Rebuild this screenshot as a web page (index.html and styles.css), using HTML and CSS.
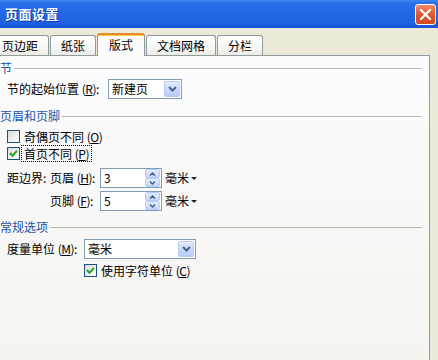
FILE: index.html
```html
<!DOCTYPE html>
<html lang="zh-CN">
<head>
<meta charset="UTF-8">
<title>页面设置</title>
<link rel="stylesheet" href="styles.css">
</head>
<body>

<div class="titlebar">
  <span class="title">页面设置</span>
  <span class="close">
    <svg width="13" height="13" viewBox="0 0 13 13"><path d="M2 2 L11 11 M11 2 L2 11" stroke="#fff" stroke-width="2.2" stroke-linecap="round"/></svg>
  </span>
</div>

<div class="tabs">
  <div class="tab first">页边距</div>
  <div class="tab">纸张</div>
  <div class="tab active">版式</div>
  <div class="tab">文档网格</div>
  <div class="tab">分栏</div>
</div>

<div class="page">

  <!-- 节 -->
  <div class="group g1"><span>节</span><i></i></div>
  <div class="row r-start">
    <span class="label">节的起始位置 <span class="key">(<u>R</u>)</span>:</span>
    <div class="select sel-start">
      <span class="val">新建页</span>
      <span class="drop"><svg width="9" height="6" viewBox="0 0 9 6"><path d="M1 1 L4.5 4.5 L8 1" fill="none" stroke="#4d6185" stroke-width="2"/></svg></span>
    </div>
  </div>

  <!-- 页眉和页脚 -->
  <div class="group g2"><span>页眉和页脚</span><i></i></div>
  <div class="row cb cb1">
    <span class="box"></span>
    <span class="cb-label">奇偶页不同 <span class="key">(<u>O</u>)</span></span>
  </div>
  <div class="row cb cb2">
    <span class="box"><svg width="11" height="11" viewBox="0 0 11 11"><path d="M2 5 L4.5 7.8 L9 2.8" fill="none" stroke="#21a121" stroke-width="2"/></svg></span>
    <span class="cb-label focus">首页不同 <span class="key">(<u>P</u>)</span></span>
  </div>

  <div class="row spin-row s1">
    <span>距边界:</span>
    <span>页眉 <span class="key">(<u>H</u>)</span>:</span>
    <div class="spin">
      <span class="val">3</span>
      <span class="btns">
        <span class="sbtn"><svg width="7" height="4" viewBox="0 0 7 4"><path d="M1 3.5 L3.5 1 L6 3.5" fill="none" stroke="#4d6185" stroke-width="1.5"/></svg></span>
        <span class="sbtn"><svg width="7" height="4" viewBox="0 0 7 4"><path d="M1 0.5 L3.5 3 L6 0.5" fill="none" stroke="#4d6185" stroke-width="1.5"/></svg></span>
      </span>
    </div>
    <span class="unit">毫米<b></b></span>
  </div>
  <div class="row spin-row s2">
    <span></span>
    <span>页脚 <span class="key">(<u>F</u>)</span>:</span>
    <div class="spin">
      <span class="val">5</span>
      <span class="btns">
        <span class="sbtn"><svg width="7" height="4" viewBox="0 0 7 4"><path d="M1 3.5 L3.5 1 L6 3.5" fill="none" stroke="#4d6185" stroke-width="1.5"/></svg></span>
        <span class="sbtn"><svg width="7" height="4" viewBox="0 0 7 4"><path d="M1 0.5 L3.5 3 L6 0.5" fill="none" stroke="#4d6185" stroke-width="1.5"/></svg></span>
      </span>
    </div>
    <span class="unit">毫米<b></b></span>
  </div>

  <!-- 常规选项 -->
  <div class="group g3"><span>常规选项</span><i></i></div>
  <div class="row r-unit">
    <span class="label">度量单位 <span class="key">(<u>M</u>)</span>:</span>
    <div class="select sel-unit">
      <span class="val">毫米</span>
      <span class="drop"><svg width="9" height="6" viewBox="0 0 9 6"><path d="M1 1 L4.5 4.5 L8 1" fill="none" stroke="#4d6185" stroke-width="2"/></svg></span>
    </div>
  </div>
  <div class="row cb cb3">
    <span class="box"><svg width="11" height="11" viewBox="0 0 11 11"><path d="M2 5 L4.5 7.8 L9 2.8" fill="none" stroke="#21a121" stroke-width="2"/></svg></span>
    <span class="cb-label">使用字符单位 <span class="key">(<u>C</u>)</span></span>
  </div>

</div>

</body>
</html>
```

FILE: styles.css
```css
*{box-sizing:border-box}
body{
  margin:0;
  width:438px;
  height:360px;
  overflow:hidden;
  background:#ece9d8;
  font:12px/14px "Noto Sans CJK SC", sans-serif;
  color:#000;
}

/* TITLE BAR */
.titlebar{
  height:28px;
  display:flex;
  align-items:center;
  justify-content:space-between;
  padding:0 2px 0 5px;
  background:linear-gradient(#3d86f2 0, #2a70ea 3px, #2468e6 40%, #1f62e2 80%, #1553d4 100%);
}
.title{
  color:#fff;
  font-weight:bold;
  font-size:13px;
  letter-spacing:0.5px;
  text-shadow:1px 1px #0c3a9e;
}
.close{
  width:21px;
  height:21px;
  border:1px solid #fff;
  border-radius:3px;
  background:linear-gradient(#ef8a66, #e2582f 50%, #d04a22);
  display:flex;
  align-items:center;
  justify-content:center;
}

/* TABS */
.tabs{
  display:flex;
  align-items:flex-end;
  gap:1px;
  height:22px;
  margin-top:5px;
  position:relative;
  z-index:1;
}
.tab{
  height:20px;
  padding:0 10px;
  border:1px solid #919b9c;
  border-bottom:none;
  border-radius:3px 3px 0 0;
  background:linear-gradient(#fff, #f6f6f3 60%, #ecebe6);
  line-height:19px;
}
.tab.first{margin-left:-9px}
.tab.active{
  height:23px;
  padding:0 11px;
  margin-bottom:-1px;
  border-top:2px solid #e68b2c;
  box-shadow:inset 0 1px #ffc73c;
  background:#fcfcfe;
  line-height:20px;
}

/* PAGE */
.page{
  margin-left:-5px;
  width:429px;
  height:320px;
  padding-left:5px;
  border-top:1px solid #919b9c;
  border-right:1px solid #919b9c;
  background:linear-gradient(#fcfcfe, #f4f3ee);
  box-sizing:content-box;
}

.group{
  display:flex;
  align-items:center;
  height:14px;
  color:#2253a8;
}
.group i{
  flex:1;
  height:1px;
  margin:0 7px 0 2px;
  background:#b8b8ae;
}
.g1{padding-top:5px;height:19px}
.g2{margin-top:10px}
.g3{margin-top:9px}

.row{
  display:flex;
  align-items:center;
}
.key{letter-spacing:-0.5px}
.key u{text-decoration-thickness:1px;text-underline-offset:1px}

.r-start{height:20px;margin-top:4px;padding-left:7px}
.r-start .label{width:101px}
.r-unit{height:20px;margin-top:5px;padding-left:7px}
.r-unit .label{width:77px}

/* SELECT */
.select{
  display:flex;
  align-items:center;
  justify-content:space-between;
  height:20px;
  border:1px solid #7f9db9;
  background:#fff;
  padding:0 1px 0 3px;
}
.sel-start{width:74px}
.sel-unit{width:112px}
.drop{
  width:16px;
  height:16px;
  border:1px solid #b8cbf6;
  border-radius:2px;
  background:linear-gradient(#e3ebfe, #cad8fc 55%, #b9cbf9);
  display:flex;
  align-items:center;
  justify-content:center;
}

/* CHECKBOX */
.cb{height:17px;padding-left:7px}
.cb1{margin-top:5px}
.cb3{margin-top:3px;padding-left:84px}
.box{
  width:13px;
  height:13px;
  border:1px solid #1c5180;
  background:linear-gradient(135deg, #dcdcd7, #fff);
  display:flex;
  align-items:center;
  justify-content:center;
}
.cb-label{
  margin-left:1px;
  height:17px;
  padding:0 2px;
  border:1px dotted transparent;
  line-height:15px;
}
.cb-label.focus{border-color:#000}

/* SPIN */
.spin-row{
  height:20px;
  padding-left:7px;
  display:grid;
  grid-template-columns:43px 50px 62px auto;
  align-items:center;
}
.s1{margin-top:6px}
.s2{margin-top:3px}
.spin{
  display:flex;
  align-items:center;
  justify-content:space-between;
  height:20px;
  border:1px solid #7f9db9;
  background:#fff;
  padding:0 1px 0 3px;
}
.btns{
  display:flex;
  flex-direction:column;
  gap:0;
  width:15px;
  height:18px;
}
.sbtn{
  flex:1;
  border:1px solid #b8cbf6;
  border-radius:2px;
  background:linear-gradient(#e3ebfe, #c4d4fb);
  display:flex;
  align-items:center;
  justify-content:center;
}
.unit{
  margin-left:3px;
  display:flex;
  align-items:center;
}
.unit b{
  margin-left:2px;
  border-left:3px solid transparent;
  border-right:3px solid transparent;
  border-top:3px solid #222;
}
```
